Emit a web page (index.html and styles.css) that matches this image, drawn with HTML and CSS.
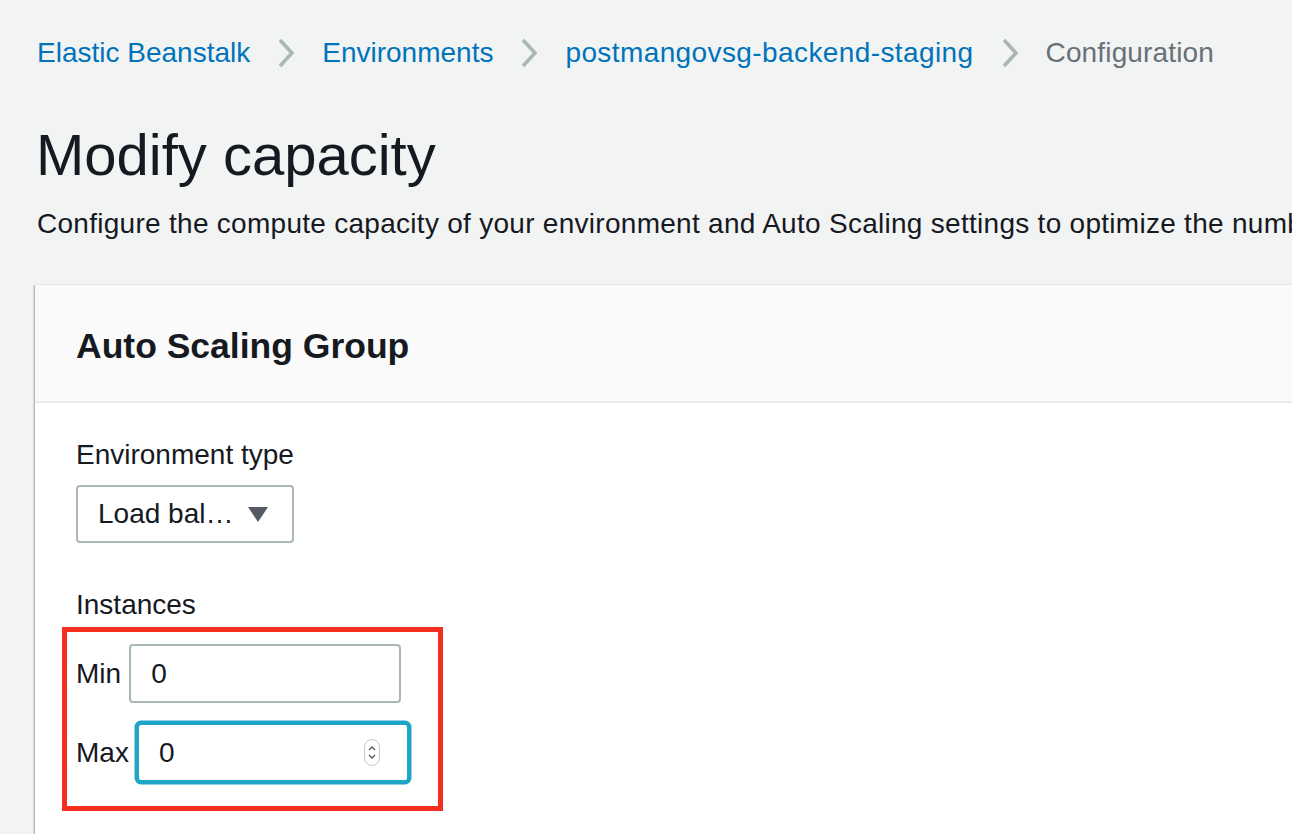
FILE: index.html
```html
<!DOCTYPE html>
<html lang="en">
<head>
<meta charset="utf-8">
<title>Modify capacity</title>
<link rel="stylesheet" href="styles.css">
</head>
<body>
<div class="page">
  <nav class="crumbs">
    <a class="crumb-link" href="#">Elastic Beanstalk</a>
    <svg class="chev" viewBox="0 0 18 30" width="18" height="30"><polyline points="3,2 15,15 3,28" fill="none" stroke="#aab7b8" stroke-width="3.6"/></svg>
    <a class="crumb-link" href="#">Environments</a>
    <svg class="chev" viewBox="0 0 18 30" width="18" height="30"><polyline points="3,2 15,15 3,28" fill="none" stroke="#aab7b8" stroke-width="3.6"/></svg>
    <a class="crumb-link crumb-wide" href="#">postmangovsg-backend-staging</a>
    <svg class="chev" viewBox="0 0 18 30" width="18" height="30"><polyline points="3,2 15,15 3,28" fill="none" stroke="#aab7b8" stroke-width="3.6"/></svg>
    <span class="crumb-current">Configuration</span>
  </nav>

  <h1 class="title">Modify capacity</h1>
  <p class="desc">Configure the compute capacity of your environment and Auto Scaling settings to optimize the number of instances used.</p>

  <section class="card">
    <header class="card-head">
      <h2 class="card-title">Auto Scaling Group</h2>
    </header>
    <div class="card-body">
      <div class="field-label">Environment type</div>
      <div class="select">
        <span class="select-text">Load bal…</span>
        <svg class="caret" viewBox="0 0 20 15" width="20" height="15"><polygon points="0,0 20,0 10,15" fill="#545b64"/></svg>
      </div>

      <div class="field-label instances-label">Instances</div>
      <div class="instances">
        <div class="inst-row">
          <label class="inst-label">Min</label>
          <input class="inst-input" type="text" value="0">
        </div>
        <div class="inst-row">
          <label class="inst-label">Max</label>
          <div class="input-wrap">
            <input class="inst-input focused" type="text" value="0">
            <span class="spinner">
              <svg viewBox="0 0 16 27" width="16" height="27">
                <rect x="0.5" y="0.5" width="15" height="26" rx="7.5" fill="#fff" stroke="#c9c9c9"/>
                <polyline points="5,11 8,8 11,11" fill="none" stroke="#555" stroke-width="1.3"/>
                <polyline points="5,16 8,19 11,16" fill="none" stroke="#555" stroke-width="1.3"/>
              </svg>
            </span>
          </div>
        </div>
        <div class="highlight"></div>
      </div>
    </div>
  </section>
</div>
</body>
</html>
```

FILE: styles.css
```css
html, body {
  margin: 0;
  padding: 0;
}
body {
  background: #f2f3f3;
  font-family: "Liberation Sans", Arial, Helvetica, sans-serif;
  color: #16191f;
  overflow: hidden;
  width: 1292px;
  height: 834px;
}
.page {
  padding-left: 35px;
}
.crumbs {
  display: flex;
  align-items: center;
  padding-top: 35px;
  height: 36px;
  font-size: 28px;
  line-height: 36px;
  white-space: nowrap;
}
.crumb-link {
  color: #0073bb;
  text-decoration: none;
  padding-left: 2px;
}
.crumb-wide {
  letter-spacing: 0.4px;
}
.crumb-current {
  color: #687078;
  padding-left: 2px;
  letter-spacing: 0.15px;
}
.chev {
  margin: 0 25px 0 27px;
  flex: none;
}
.title {
  margin: 50px 0 0;
  font-size: 58px;
  font-weight: 400;
  line-height: 68px;
  padding-left: 1px;
}
.desc {
  margin: 15px 0 0;
  font-size: 28px;
  line-height: 40px;
  white-space: nowrap;
  padding-left: 2px;
  letter-spacing: 0.28px;
}
.card {
  margin-top: 41px;
  width: 1400px;
  height: 600px;
  background: #fff;
  box-shadow: -1px 0 0 0 rgba(0, 28, 36, 0.18), -2px 1px 1px 0 rgba(0, 28, 36, 0.1), 0 -1px 0 0 rgba(0, 28, 36, 0.06);
}
.card-head {
  background: #fafafa;
  border-bottom: 2px solid #eaeded;
  height: 118px;
  box-sizing: border-box;
  padding: 39px 0 0 41px;
}
.card-title {
  margin: 0;
  font-size: 35.5px;
  font-weight: 700;
  line-height: 44px;
}
.card-body {
  padding: 34px 0 0 41px;
}
.field-label {
  font-size: 28px;
  line-height: 36px;
}
.select {
  margin-top: 12px;
  width: 218px;
  height: 58px;
  box-sizing: border-box;
  border: 2px solid #aab7b8;
  border-radius: 4px;
  display: flex;
  align-items: center;
  padding-left: 20px;
  font-size: 28px;
}
.select-text {
  flex: none;
  width: 150px;
}
.caret {
  flex: none;
  margin-left: 0;
}
.instances-label {
  margin-top: 44px;
}
.instances {
  position: relative;
  padding-top: 21px;
}
.inst-row {
  display: flex;
  align-items: center;
  gap: 8px;
  font-size: 28px;
  margin-bottom: 20px;
}
.inst-label {
  line-height: 36px;
}
.inst-input {
  width: 272px;
  height: 59px;
  box-sizing: border-box;
  border: 2px solid #aab7b8;
  border-radius: 4px;
  padding: 0 0 0 20px;
  font-family: inherit;
  font-size: 28px;
  color: #16191f;
  background: #fff;
  outline: none;
  margin: 0;
}
.inst-input.focused {
  border-color: #1ea5c8;
  box-shadow: 0 0 0 2.5px #1ea5c8;
}
.input-wrap {
  position: relative;
  display: flex;
}
.spinner {
  position: absolute;
  left: 227px;
  top: 16px;
  width: 16px;
  height: 27px;
  display: block;
}
.spinner svg {
  display: block;
}
.highlight {
  position: absolute;
  left: -14px;
  top: 4px;
  width: 381px;
  height: 184px;
  box-sizing: border-box;
  border: 5px solid #f52f1f;
  pointer-events: none;
}
```
